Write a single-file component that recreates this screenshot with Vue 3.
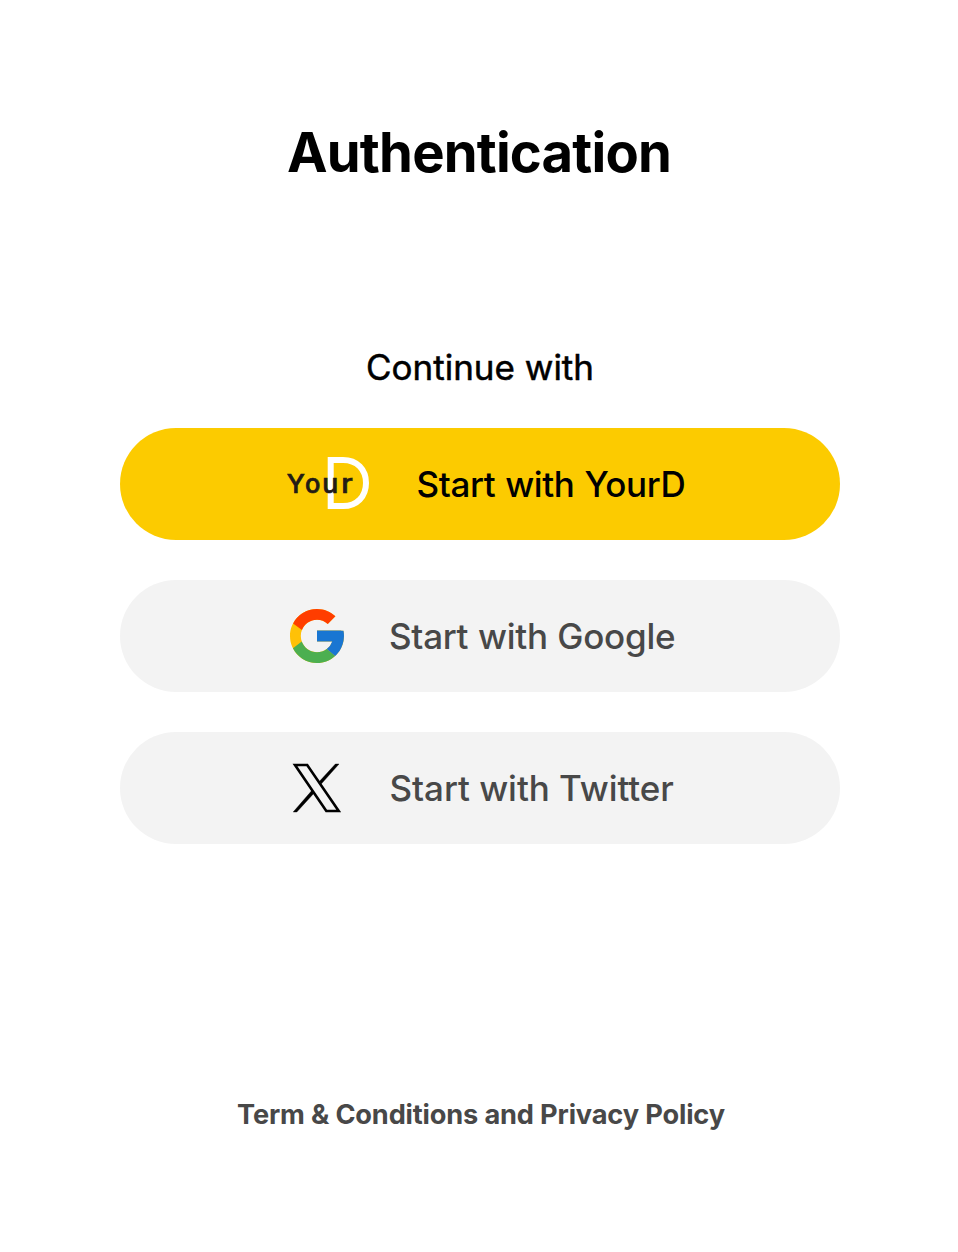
<script setup>
const terms = 'Term & Conditions and Privacy Policy'
</script>

<template>
  <main class="page">
    <h1>Authentication</h1>
    <p class="lead">Continue with</p>
    <div class="actions">
      <button class="btn yourd">
        <svg class="logo-yourd" width="84" height="56" viewBox="0 0 84 56">
          <path d="M43.7 4H56C70 4 79 13.5 79 27S70 50 56 50H43.7Z" fill="none" stroke="#fff" stroke-width="6" />
          <g fill="#231b15" stroke="#231b15" stroke-width=".7" font-size="26" font-weight="500">
            <text x="-.3" y="36.5">Y</text>
            <text x="18" y="36.5" textLength="15" lengthAdjust="spacingAndGlyphs">o</text>
            <text x="35.3" y="36.5" textLength="15.5" lengthAdjust="spacingAndGlyphs">u</text>
            <text x="54.3" y="36.5" textLength="11" lengthAdjust="spacingAndGlyphs">r</text>
          </g>
        </svg>
        <span>Start with YourD</span>
      </button>
      <button class="btn google">
        <svg width="54" height="54" viewBox="4 4 40 40">
          <path fill="#FFC107" d="M43.611 20.083H42V20H24v8h11.303c-1.649 4.657-6.08 8-11.303 8c-6.627 0-12-5.373-12-12s5.373-12 12-12c3.059 0 5.842 1.154 7.961 3.039l5.657-5.657C34.046 6.053 29.268 4 24 4C12.955 4 4 12.955 4 24s8.955 20 20 20s20-8.955 20-20c0-1.341-.138-2.65-.389-3.917" />
          <path fill="#FF3D00" d="m6.306 14.691l6.571 4.819C14.655 15.108 18.961 12 24 12c3.059 0 5.842 1.154 7.961 3.039l5.657-5.657C34.046 6.053 29.268 4 24 4C16.318 4 9.656 8.337 6.306 14.691" />
          <path fill="#4CAF50" d="M24 44c5.166 0 9.86-1.977 13.409-5.192l-6.19-5.238A11.9 11.9 0 0 1 24 36c-5.202 0-9.619-3.317-11.283-7.946l-6.522 5.025C9.505 39.556 16.227 44 24 44" />
          <path fill="#1976D2" d="M43.611 20.083H42V20H24v8h11.303a12.04 12.04 0 0 1-4.087 5.571l.003-.002l6.19 5.238C36.971 39.205 44 34 44 24c0-1.341-.138-2.65-.389-3.917" />
        </svg>
        <span>Start with Google</span>
      </button>
      <button class="btn x">
        <svg width="50" height="50" viewBox="0 0 50 50">
          <path d="M3 2H15.2L46.7 48H34.3Z" fill="none" stroke="#000" stroke-width="2.6" />
          <path d="M43.4 1H47L29.4 20.8L27.3 18.6ZM19.8 27.6L21.7 30.4L4.8 49H1.2Z" fill="#000" stroke="#000" stroke-width=".4" />
        </svg>
        <span>Start with Twitter</span>
      </button>
    </div>
    <p class="terms">{{ terms }}</p>
  </main>
</template>

<style>
body { background: #fff; }
</style>

<style scoped>
.page {
  box-sizing: border-box;
  height: 1252px;
  padding: 117px 118px 0 120px;
  font-family: Inter, sans-serif;
  color: #000;
  text-align: center;
}
h1 { margin: 0 0 0 -2px; font-size: 54.4px; line-height: 70px; font-weight: 700; letter-spacing: -.8px; }
.lead { margin: 158px 0 0; font-size: 35px; line-height: 44px; font-weight: 400; -webkit-text-stroke: .5px currentColor; }
.actions { display: flex; flex-direction: column; gap: 40px; margin-top: 39px; }
.btn {
  display: flex;
  align-items: center;
  box-sizing: border-box;
  width: 720px;
  height: 112px;
  padding: 0 0 0 170px;
  border: 0;
  border-radius: 56px;
  background: #f3f3f3;
  color: #484848;
  font: 500 35px/44px Inter, sans-serif;
  white-space: nowrap;
}
.btn svg { flex: none; }
.yourd { background: #fccb00; color: #000; padding-left: 167px; gap: 45.5px; letter-spacing: -.38px; word-spacing: 1px; }
.google { gap: 45px; letter-spacing: -.27px; word-spacing: .6px; }
.x { padding-left: 172px; gap: 47.5px; letter-spacing: -.05px; }
.terms { margin: 253px 0 0 2px; font-size: 27.2px; line-height: 36px; font-weight: 700; color: #484848; letter-spacing: -.16px; }
</style>
